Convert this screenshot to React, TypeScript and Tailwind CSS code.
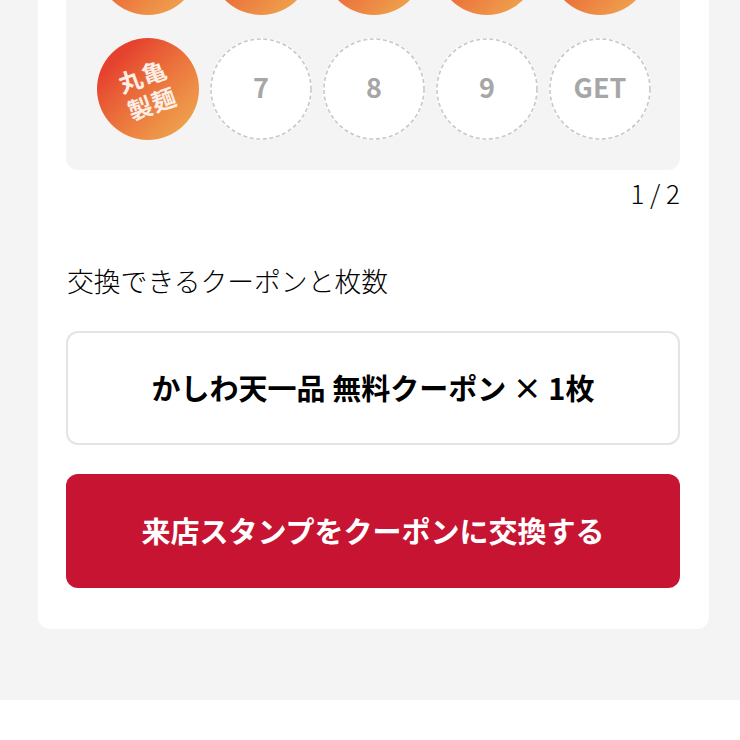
const cjk = "font-['Noto_Sans_CJK_JP','Noto_Sans',sans-serif]";

// top row is cut by the window, only the bottom of the circle shows
const Logo = ({ showName = false }: { showName?: boolean }) => (
  <div className="flex h-[102px] w-[102px] shrink-0 items-center justify-center rounded-full bg-gradient-to-br from-[#e5412e] from-20% to-[#eea44e] to-90%">
    {showName && (
      <div className="mr-[2px] -rotate-[20deg] text-center text-[24px] leading-[29px] font-bold tracking-[1px] text-[#fbeee6]">
        丸亀
        <br />
        製麺
      </div>
    )}
  </div>
);

const EmptyStamp = ({ label }: { label: string }) => (
  <div className="relative flex h-[102px] w-[102px] shrink-0 items-center justify-center rounded-full bg-white pb-[3px] text-[27px] font-bold text-[#a6a6a6]">
    <svg className="absolute inset-0" width="102" height="102" viewBox="0 0 102 102" fill="none">
      <circle cx="51" cy="51" r="50" stroke="#c8c8c8" strokeWidth="1.6" strokeDasharray="4 2.6" />
    </svg>
    <span className="relative">{label}</span>
  </div>
);

export default function App() {
  return (
    <div className={`h-[740px] overflow-hidden bg-white ${cjk}`}>
      <div className="flex h-[700px] flex-col bg-[#f4f4f4] pl-[38px]">
        <div className="-mt-[87px] w-[671px] rounded-b-[12px] bg-white pr-[29px] pb-[41px] pl-[28px]">
          <div className="rounded-b-[12px] bg-[#f4f4f4] pb-[30px] pl-[31px]">
            <div className="mb-[23px] flex gap-[11px]">
              <Logo />
              <Logo />
              <Logo />
              <Logo />
              <Logo />
            </div>
            <div className="flex gap-[11px]">
              <Logo showName />
              <EmptyStamp label="7" />
              <EmptyStamp label="8" />
              <EmptyStamp label="9" />
              <EmptyStamp label="GET" />
            </div>
          </div>

          <p className="mt-[6px] text-right text-[26px] leading-[34px] font-light text-black">1 / 2</p>

          <h2 className="mt-[51px] ml-[1px] text-[26.8px] leading-[40px] font-light text-black">交換できるクーポンと枚数</h2>

          <div className="mt-[30px] flex h-[114px] items-center justify-center rounded-[12px] border-2 border-[#e4e4e4] bg-white text-[29px] font-bold text-black">
            かしわ天一品 無料クーポン × 1枚
          </div>

          <button
            type="button"
            className="mt-[29px] flex h-[114px] w-full items-center justify-center rounded-[12px] bg-[#c61432] text-[29px] font-bold text-white"
          >
            来店スタンプをクーポンに交換する
          </button>
        </div>
      </div>
    </div>
  );
}
